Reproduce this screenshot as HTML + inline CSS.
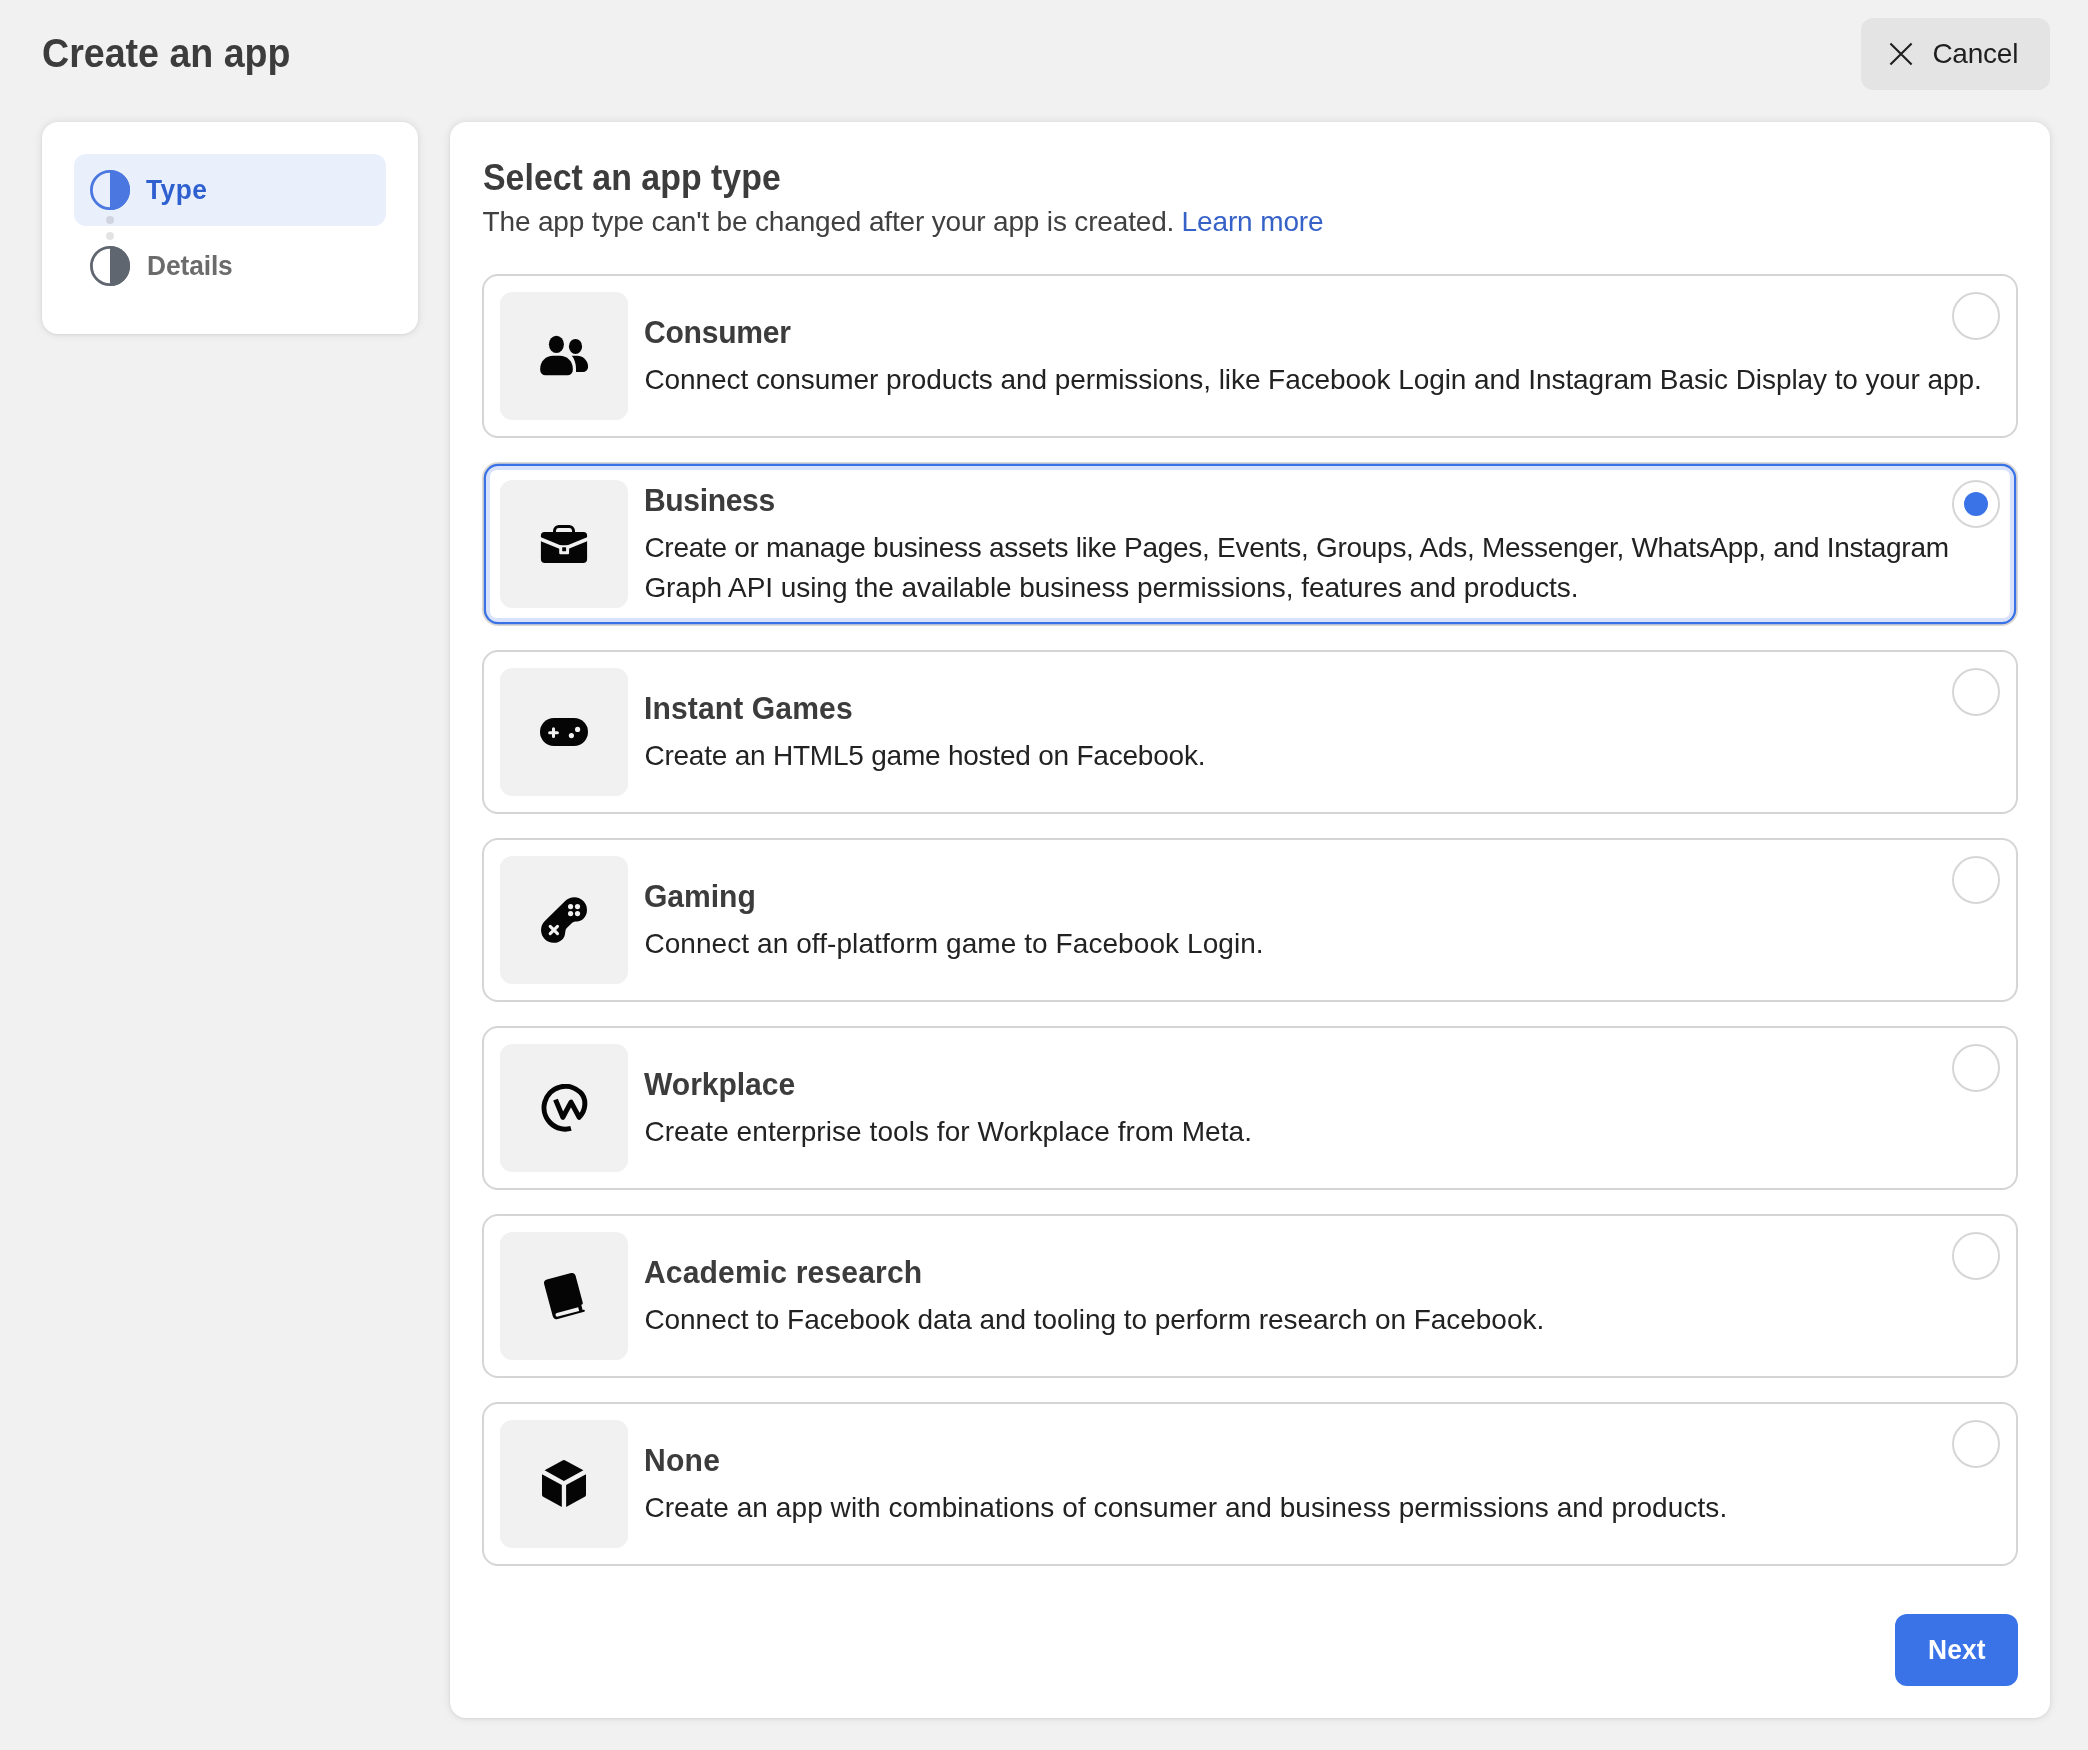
<!DOCTYPE html>
<html lang="en">
<head>
<meta charset="utf-8">
<title>Create an app</title>
<style>
html,body{margin:0;padding:0}
body{width:2088px;height:1750px;background:#f1f1f1;position:relative;overflow:hidden;
 font-family:"Liberation Sans",Arial,Helvetica,sans-serif;-webkit-font-smoothing:antialiased}
.abs{position:absolute;display:block}
.t{position:absolute;white-space:nowrap;margin:0}
#txt{position:absolute;left:0;top:0;width:2088px;height:1750px;will-change:transform}
.panel{position:absolute;background:#fff;border-radius:16px;box-shadow:0 0 10px rgba(0,0,0,.10),0 1px 3px rgba(0,0,0,.06)}
#side{left:42px;top:122px;width:376px;height:212px}
#main{left:450px;top:122px;width:1600px;height:1596px}
#cancelbtn{position:absolute;left:1861px;top:18px;width:189px;height:72px;border-radius:12px;background:#e4e4e4}
#nextbtn{position:absolute;left:1895px;top:1614px;width:123px;height:72px;border-radius:12px;background:#3a73e8}
#active{position:absolute;left:74px;top:154px;width:312px;height:72px;border-radius:12px;background:#eaeffc}
.card{position:absolute;left:482px;width:1532px;height:160px;border:2px solid #d5d5d5;border-radius:16px;background:#fff}
.ibox{position:absolute;left:500px;width:128px;height:128px;border-radius:12px;background:#f1f1f1}
.radio{position:absolute;left:1952px;width:44px;height:44px;border:2px solid #d6d6d6;border-radius:50%;background:#fff}
.radio i{position:absolute;left:10px;top:10px;width:24px;height:24px;border-radius:50%;background:#3a73e8}
.dot{position:absolute;width:8px;height:8px;border-radius:50%;background:rgba(0,0,0,.11)}
</style>
</head>
<body>
<div id="cancelbtn"></div>
<svg class="abs" style="left:1885px;top:38px" width="32" height="32" viewBox="0 0 32 32"><path d="M5.4 5.4 L26.6 26.6 M26.6 5.4 L5.4 26.6" stroke="#1f1f1f" stroke-width="2.1" fill="none"/></svg>
<div id="side" class="panel"></div>
<div id="active"></div>
<div class="dot" style="left:106px;top:216px"></div>
<div class="dot" style="left:106px;top:232px"></div>
<svg class="abs" style="left:88px;top:168px" width="44" height="44" viewBox="0 0 44 44"><circle cx="22" cy="22" r="18.6" fill="none" stroke="#4a78e0" stroke-width="2.8"/><path d="M22 2 A20 20 0 0 1 22 42 Z" fill="#4a78e0"/></svg>
<svg class="abs" style="left:88px;top:244px" width="44" height="44" viewBox="0 0 44 44"><circle cx="22" cy="22" r="18.6" fill="none" stroke="#5f6670" stroke-width="2.8"/><path d="M22 2 A20 20 0 0 1 22 42 Z" fill="#5f6670"/></svg>
<div id="main" class="panel"></div>
<div class="card" style="top:274px"></div><div class="ibox" style="top:292px"></div><svg class="abs" style="left:540px;top:332px" width="48" height="48" viewBox="0 0 24 24">
<ellipse cx="8.2" cy="6.15" rx="3.75" ry="4.3" fill="#050505"/>
<path d="M0.1 18.3 C0.1 14.6 3 11.9 6.6 11.9 H9.9 C13.5 11.9 16.4 14.6 16.4 18.3 V19 A2.6 2.6 0 0 1 13.8 21.6 H2.7 A2.6 2.6 0 0 1 0.1 19 Z" fill="#050505"/>
<ellipse cx="17.75" cy="7.2" rx="3.3" ry="3.75" fill="#050505"/>
<path d="M15.9 11.9 H18.6 C21.6 11.9 24.05 14.4 24.05 17.4 A2.6 2.6 0 0 1 21.45 20 H18 V18.3 C18 15.7 17.2 13.5 15.9 11.9 Z" fill="#050505"/>
</svg><div class="radio" style="top:292px"></div>
<svg class="abs" style="left:482px;top:462px" width="1536" height="164" viewBox="0 0 1536 164"><rect x="0" y="0" width="1536" height="164" rx="16" fill="#dcd9d4"/><rect x="1.8" y="1.8" width="1532.4" height="160.4" rx="14.4" fill="#3a72e6"/><rect x="4" y="4" width="1528" height="156" rx="12.2" fill="#d8e3fb"/><rect x="8" y="8" width="1520" height="148" rx="6.5" fill="#ffffff"/></svg><div class="ibox" style="top:480px"></div><svg class="abs" style="left:540px;top:520px" width="48" height="48" viewBox="0 0 24 24">
<path d="M7.25 6.4 V5.4 A2.2 2.2 0 0 1 9.45 3.2 H14.55 A2.2 2.2 0 0 1 16.75 5.4 V6.4" fill="none" stroke="#050505" stroke-width="1.5"/>
<path d="M2.2 6 H21.8 A1.75 1.75 0 0 1 23.55 7.75 V8.6 L12.6 13.1 A1.6 1.6 0 0 1 11.4 13.1 L0.45 8.6 V7.75 A1.75 1.75 0 0 1 2.2 6 Z" fill="#050505"/>
<path d="M0.45 10.6 L11.2 15 A2.1 2.1 0 0 0 12.8 15 L23.55 10.6 V19.55 A2 2 0 0 1 21.55 21.55 H2.45 A2 2 0 0 1 0.45 19.55 Z" fill="#050505"/>
<rect x="9.6" y="12.6" width="4.95" height="4.5" rx="0.6" fill="#f1f1f1"/>
<rect x="11.1" y="13.65" width="1.95" height="1.95" rx="0.2" fill="#050505"/>
</svg><div class="radio" style="top:480px"><i></i></div>
<div class="card" style="top:650px"></div><div class="ibox" style="top:668px"></div><svg class="abs" style="left:540px;top:708px" width="48" height="48" viewBox="0 0 24 24">
<rect x="0" y="5" width="24" height="14" rx="7" fill="#050505"/>
<path d="M6.75 10.4 V14.3 M4.8 12.35 H8.7" stroke="#f1f1f1" stroke-width="1.5" stroke-linecap="round" fill="none"/>
<circle cx="18.8" cy="10.7" r="1.3" fill="#f1f1f1"/>
<circle cx="15.7" cy="13.8" r="1.3" fill="#f1f1f1"/>
</svg><div class="radio" style="top:668px"></div>
<div class="card" style="top:838px"></div><div class="ibox" style="top:856px"></div><svg class="abs" style="left:540px;top:896px" width="48" height="48" viewBox="0 0 24 24">
<g transform="rotate(-44.4 12 12)">
<path d="M-1.55 12 A6.35 6.35 0 0 1 4.8 5.65 H19.2 A6.35 6.35 0 0 1 25.55 12 A6.35 6.35 0 0 1 19.2 18.35 C16.6 18.35 15.6 15.85 13.8 15.85 H10.2 C8.4 15.85 7.4 18.35 4.8 18.35 A6.35 6.35 0 0 1 -1.55 12 Z" fill="#050505"/>
</g>
<circle cx="15.3" cy="5.3" r="1.3" fill="#f1f1f1"/>
<circle cx="18.75" cy="5.3" r="1.3" fill="#f1f1f1"/>
<circle cx="15.3" cy="8.8" r="1.3" fill="#f1f1f1"/>
<circle cx="18.75" cy="8.8" r="1.3" fill="#f1f1f1"/>
<path d="M5.1 15.2 L8.75 18.85 M8.75 15.2 L5.1 18.85" stroke="#f1f1f1" stroke-width="1.55" stroke-linecap="round" fill="none"/>
</svg><div class="radio" style="top:856px"></div>
<div class="card" style="top:1026px"></div><div class="ibox" style="top:1044px"></div><svg class="abs" style="left:540px;top:1084px" width="48" height="48" viewBox="0 0 24 24">
<path d="M15.48 22.21 A10.7 10.7 0 1 1 20.28 4.30 C21.9 5.9 22.6 8.6 22.36 10.93 C22.2 12.9 21.2 15 19.57 16.65 L15.5 9.06 L11.43 16.65 L7.75 7.8" fill="none" stroke="#050505" stroke-width="2.5" stroke-linejoin="round" stroke-linecap="butt"/>
</svg><div class="radio" style="top:1044px"></div>
<div class="card" style="top:1214px"></div><div class="ibox" style="top:1232px"></div><svg class="abs" style="left:540px;top:1272px" width="48" height="48" viewBox="0 0 24 24">
<g transform="rotate(-15 12 12) translate(-0.2 0.15)">
<path d="M4.15 3.6 A1.9 1.9 0 0 1 6.05 1.7 H18.6 A1.8 1.8 0 0 1 20.4 3.5 V17.5 A0.8 0.8 0 0 1 19.6 18.3 H19.4 V21.0 H19.85 A0.55 0.55 0 0 1 19.85 22.1 H6.2 A2.05 2.05 0 0 1 4.15 20.05 Z" fill="#050505"/>
<path d="M6.55 19.15 H17.6 V21.0 H6.55 A0.92 0.92 0 0 1 6.55 19.15 Z" fill="#f1f1f1"/>
</g>
</svg><div class="radio" style="top:1232px"></div>
<div class="card" style="top:1402px"></div><div class="ibox" style="top:1420px"></div><svg class="abs" style="left:540px;top:1460px" width="48" height="48" viewBox="0 0 24 24">
<path d="M11.5 0.15 A0.9 0.9 0 0 1 12.4 0.15 L21.7 5.15 L11.95 10.5 L2.3 5.15 Z" fill="#050505"/>
<path d="M1.0 7.15 L10.9 12.55 V23.5 L1.6 18.4 A1.2 1.2 0 0 1 1.0 17.4 Z" fill="#050505"/>
<path d="M23.0 7.15 L13.05 12.55 V23.5 L22.4 18.4 A1.2 1.2 0 0 0 23.0 17.4 Z" fill="#050505"/>
</svg><div class="radio" style="top:1420px"></div>
<div id="nextbtn"></div>
<div id="txt">
<h1 id="title" class="t" style="left:42.20px;top:29.14px;font-size:40px;line-height:48px;font-weight:700;color:#3c3c3c;letter-spacing:-0.017px;transform:scaleX(0.94);transform-origin:0 50%;">Create an app</h1>
<div id="cancel" class="t" style="left:1932.40px;top:33.90px;font-size:28px;line-height:40px;font-weight:400;color:#1f1f1f;letter-spacing:-0.240px;">Cancel</div>
<div id="type" class="t" style="left:146.40px;top:170.10px;font-size:28px;line-height:40px;font-weight:700;color:#2f60cf;letter-spacing:0.533px;transform:scaleX(0.94);transform-origin:0 50%;">Type</div>
<div id="details" class="t" style="left:146.80px;top:246.10px;font-size:28px;line-height:40px;font-weight:700;color:#6b6b6b;letter-spacing:-0.100px;transform:scaleX(0.94);transform-origin:0 50%;">Details</div>
<h2 id="heading" class="t" style="left:482.60px;top:156.33px;font-size:36px;line-height:44px;font-weight:700;color:#3c3c3c;letter-spacing:0.036px;transform:scaleX(0.94);transform-origin:0 50%;">Select an app type</h2>
<div id="sub" class="t" style="left:482.60px;top:201.80px;font-size:28px;line-height:40px;font-weight:400;color:#404040;letter-spacing:-0.171px;">The app type can't be changed after your app is created.</div>
<a id="learn" class="t" style="left:1181.60px;top:201.80px;font-size:28px;line-height:40px;font-weight:400;color:#3662c8;letter-spacing:-0.133px;text-decoration:none;">Learn more</a>
<div id="next" class="t" style="left:1927.80px;top:1630.30px;font-size:28px;line-height:40px;font-weight:700;color:#ffffff;letter-spacing:0.200px;transform:scaleX(0.94);transform-origin:0 50%;">Next</div>
<h3 id="consumer_t" class="t" style="left:644.40px;top:312.11px;font-size:32px;line-height:40px;font-weight:700;color:#3c3c3c;letter-spacing:-0.257px;transform:scaleX(0.94);transform-origin:0 50%;">Consumer</h3>
<div id="consumer_d0" class="t" style="left:644.40px;top:359.60px;font-size:28px;line-height:40px;font-weight:400;color:#222222;letter-spacing:-0.072px;">Connect consumer products and permissions, like Facebook Login and Instagram Basic Display to your app.</div>
<h3 id="business_t" class="t" style="left:644.00px;top:479.91px;font-size:32px;line-height:40px;font-weight:700;color:#3c3c3c;letter-spacing:-0.400px;transform:scaleX(0.94);transform-origin:0 50%;">Business</h3>
<div id="business_d0" class="t" style="left:644.40px;top:527.60px;font-size:28px;line-height:40px;font-weight:400;color:#222222;letter-spacing:-0.279px;">Create or manage business assets like Pages, Events, Groups, Ads, Messenger, WhatsApp, and Instagram</div>
<div id="business_d1" class="t" style="left:644.40px;top:567.60px;font-size:28px;line-height:40px;font-weight:400;color:#222222;letter-spacing:-0.060px;">Graph API using the available business permissions, features and products.</div>
<h3 id="instant_t" class="t" style="left:644.00px;top:688.11px;font-size:32px;line-height:40px;font-weight:700;color:#3c3c3c;letter-spacing:0.117px;transform:scaleX(0.94);transform-origin:0 50%;">Instant Games</h3>
<div id="instant_d0" class="t" style="left:644.40px;top:735.60px;font-size:28px;line-height:40px;font-weight:400;color:#222222;letter-spacing:-0.220px;">Create an HTML5 game hosted on Facebook.</div>
<h3 id="gaming_t" class="t" style="left:644.40px;top:876.11px;font-size:32px;line-height:40px;font-weight:700;color:#3c3c3c;letter-spacing:-0.040px;transform:scaleX(0.94);transform-origin:0 50%;">Gaming</h3>
<div id="gaming_d0" class="t" style="left:644.40px;top:923.60px;font-size:28px;line-height:40px;font-weight:400;color:#222222;letter-spacing:0.074px;">Connect an off-platform game to Facebook Login.</div>
<h3 id="workplace_t" class="t" style="left:644.40px;top:1064.11px;font-size:32px;line-height:40px;font-weight:700;color:#3c3c3c;letter-spacing:-0.050px;transform:scaleX(0.94);transform-origin:0 50%;">Workplace</h3>
<div id="workplace_d0" class="t" style="left:644.40px;top:1111.60px;font-size:28px;line-height:40px;font-weight:400;color:#222222;letter-spacing:0.059px;">Create enterprise tools for Workplace from Meta.</div>
<h3 id="academic_t" class="t" style="left:643.80px;top:1252.11px;font-size:32px;line-height:40px;font-weight:700;color:#3c3c3c;letter-spacing:0.150px;transform:scaleX(0.94);transform-origin:0 50%;">Academic research</h3>
<div id="academic_d0" class="t" style="left:644.40px;top:1299.60px;font-size:28px;line-height:40px;font-weight:400;color:#222222;letter-spacing:-0.044px;">Connect to Facebook data and tooling to perform research on Facebook.</div>
<h3 id="none_t" class="t" style="left:644.00px;top:1440.11px;font-size:32px;line-height:40px;font-weight:700;color:#3c3c3c;letter-spacing:0.267px;transform:scaleX(0.94);transform-origin:0 50%;">None</h3>
<div id="none_d0" class="t" style="left:644.40px;top:1487.60px;font-size:28px;line-height:40px;font-weight:400;color:#222222;letter-spacing:0.071px;">Create an app with combinations of consumer and business permissions and products.</div>
</div>
</body>
</html>
